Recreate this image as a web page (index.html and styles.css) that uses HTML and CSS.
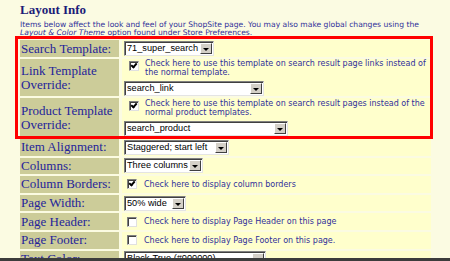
FILE: index.html
```html
<!DOCTYPE html>
<html lang="en">
<head>
    <meta charset="UTF-8">
    <title>Layout Info</title>
    <link rel="stylesheet" href="styles.css">
</head>
<body>

    <div class="page">
        <h2 class="title">Layout Info</h2>
        <p class="intro">Items below affect the look and feel of your ShopSite page. You may also make global changes using
            the <i>Layout &amp; Color Theme</i> option found under Store Preferences.</p>

        <table class="settings">
            <tr class="first">
                <td class="label">Search Template:</td>
                <td class="value"><span class="dropdown" style="width:90px"><span class="dd-text">71_super_search</span><span class="dd-btn"></span></span></td>
            </tr>
            <tr class="tall">
                <td class="label">Link Template<br>Override:</td>
                <td class="value">
                    <div class="check-row">
                        <span class="checkbox checked"></span>
                        <span class="note">Check here to use this template on search result page links instead of the normal template.</span>
                    </div>
                    <span class="dropdown" style="width:140px"><span class="dd-text">search_link</span><span class="dd-btn"></span></span>
                </td>
            </tr>
            <tr class="taller">
                <td class="label">Product Template<br>Override:</td>
                <td class="value">
                    <div class="check-row">
                        <span class="checkbox checked"></span>
                        <span class="note">Check here to use this template on search result pages instead of the normal product templates.</span>
                    </div>
                    <span class="dropdown" style="width:164px"><span class="dd-text">search_product</span><span class="dd-btn"></span></span>
                </td>
            </tr>
            <tr>
                <td class="label">Item Alignment:</td>
                <td class="value"><span class="dropdown" style="width:105px"><span class="dd-text">Staggered; start left</span><span class="dd-btn"></span></span></td>
            </tr>
            <tr>
                <td class="label">Columns:</td>
                <td class="value"><span class="dropdown" style="width:79px"><span class="dd-text">Three columns</span><span class="dd-btn"></span></span></td>
            </tr>
            <tr>
                <td class="label">Column Borders:</td>
                <td class="value"><span class="checkbox checked"></span><span class="note inline">Check here to display column borders</span></td>
            </tr>
            <tr>
                <td class="label">Page Width:</td>
                <td class="value"><span class="dropdown" style="width:62px"><span class="dd-text">50% wide</span><span class="dd-btn"></span></span></td>
            </tr>
            <tr>
                <td class="label">Page Header:</td>
                <td class="value"><span class="checkbox"></span><span class="note inline">Check here to display Page Header on this page</span></td>
            </tr>
            <tr>
                <td class="label">Page Footer:</td>
                <td class="value"><span class="checkbox"></span><span class="note inline">Check here to display Page Footer on this page.</span></td>
            </tr>
            <tr>
                <td class="label">Text Color:</td>
                <td class="value"><span class="dropdown" style="width:142px"><span class="dd-text">Black-True (#000000)</span><span class="dd-btn"></span></span></td>
            </tr>
        </table>

        <!-- red annotation box drawn over the template rows -->
        <div class="highlight"></div>
    </div>

    <div class="window-edge"></div>

</body>
</html>
```

FILE: styles.css
```css
body {
    margin: 0;
    background: #fbfbe2;
    overflow: hidden;
}

.page {
    position: relative;
    padding: 0 0 0 20px;
}

.title {
    margin: 0;
    padding-top: 3px;
    font-family: "Liberation Serif", serif;
    font-size: 13px;
    font-weight: bold;
    line-height: 14px;
    color: #1c1c78;
}

.intro {
    margin: 4px 0 0 0;
    width: 412px;
    font-family: "DejaVu Sans", sans-serif;
    font-size: 7.6px;
    line-height: 8px;
    color: #30309a;
}

.settings {
    margin: 1px 0 0 -3px;
    border-spacing: 3px 2px;
    width: 417px;
}

.settings td {
    padding: 0;
    height: 16.6px;
}

.settings .first td {
    height: 17px;
}

.settings .tall td {
    height: 37px;
}

.settings .taller td {
    height: 39px;
}

.label {
    width: 98px;
    padding-left: 1px !important;
    background: #cccc99;
    font-family: "Liberation Serif", serif;
    font-size: 13px;
    line-height: 14px;
    color: #24249a;
    vertical-align: middle;
}

.value {
    background: #ffffcc;
    vertical-align: middle;
    padding-left: 2px !important;
    font-size: 0;
}

.check-row {
    display: flex;
    align-items: flex-start;
    margin-bottom: 4px;
}

.check-row .checkbox {
    margin: 2px 6px 0 5px;
    flex: none;
}

.note {
    font-family: "DejaVu Sans", sans-serif;
    font-size: 8px;
    line-height: 9px;
    color: #30309a;
}

.note.inline {
    margin-left: 7px;
    vertical-align: middle;
}

.checkbox {
    display: inline-block;
    box-sizing: border-box;
    width: 10px;
    height: 10px;
    margin-left: 3px;
    background: #fff;
    border: 1px solid #808080;
    border-right-color: #e0e0e0;
    border-bottom-color: #e0e0e0;
    box-shadow: inset 1px 1px 0 #404040;
    vertical-align: middle;
    position: relative;
}

.checkbox.checked::after {
    content: "";
    position: absolute;
    left: 2px;
    top: 0px;
    width: 2px;
    height: 4px;
    border: solid #000;
    border-width: 0 2px 2px 0;
    transform: rotate(40deg);
}

.dropdown {
    display: inline-flex;
    box-sizing: border-box;
    height: 15px;
    background: #fff;
    border: 1px solid #808080;
    border-right-color: #e4e4e4;
    border-bottom-color: #e4e4e4;
    box-shadow: inset 1px 1px 0 #404040;
    vertical-align: middle;
}

.dd-text {
    flex: 1;
    padding-left: 2px;
    font-family: "Liberation Sans", sans-serif;
    font-size: 9.2px;
    line-height: 13px;
    color: #000;
    white-space: nowrap;
    overflow: hidden;
}

.dd-btn {
    position: relative;
    width: 12px;
    margin: 1px 1px 1px 0;
    background: #d4d0c8;
    border: 1px solid #fff;
    border-right-color: #404040;
    border-bottom-color: #404040;
    box-sizing: border-box;
}

.dd-btn::after {
    content: "";
    position: absolute;
    left: 2px;
    top: 4px;
    border-left: 3px solid transparent;
    border-right: 3px solid transparent;
    border-top: 3px solid #000;
}

.highlight {
    position: absolute;
    left: 15px;
    top: 36px;
    width: 412px;
    height: 97px;
    border: 3px solid #ff0000;
}

.window-edge {
    position: fixed;
    left: 0;
    right: 0;
    bottom: 0;
    height: 3px;
    background: #3c3c3c;
}
```
